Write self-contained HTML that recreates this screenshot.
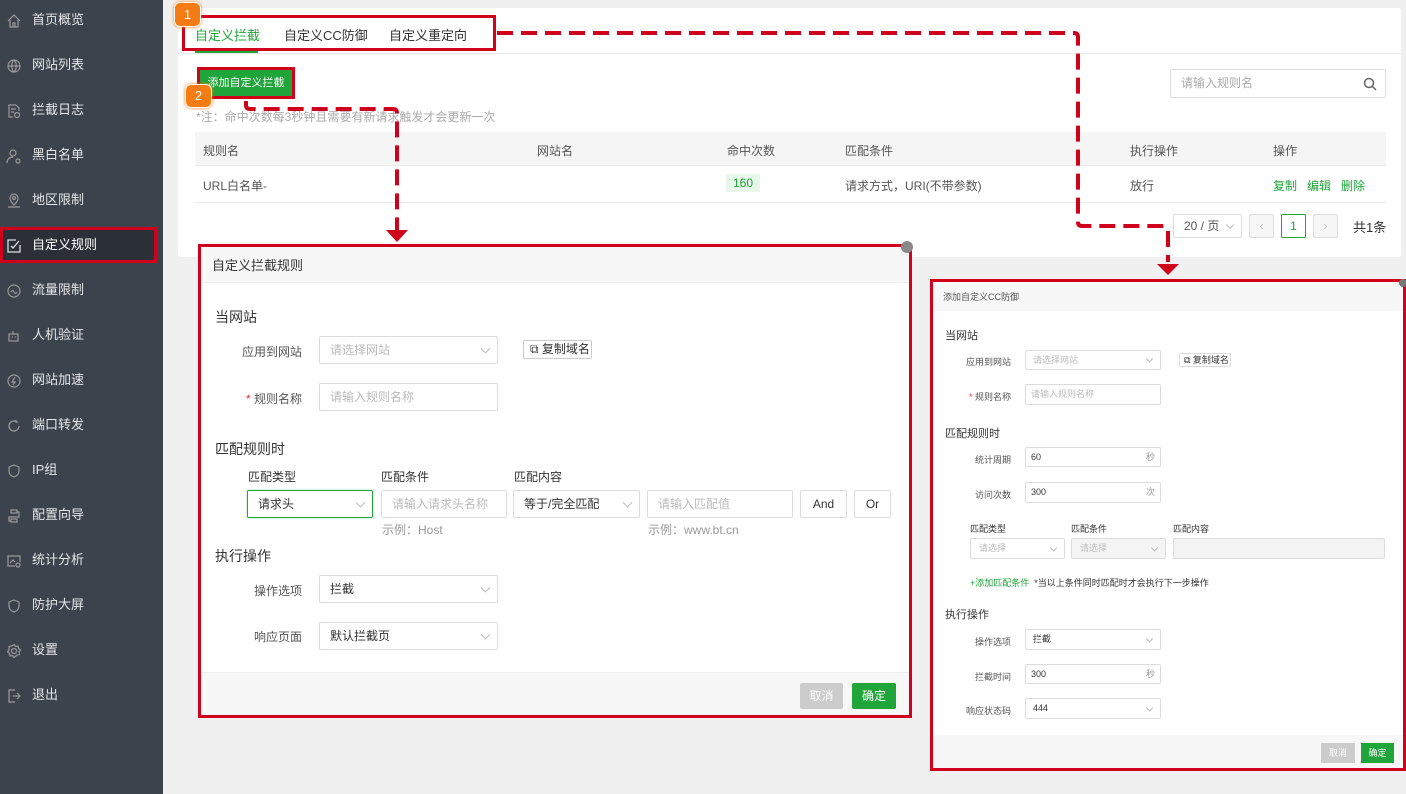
<!DOCTYPE html>
<html><head><meta charset="utf-8"><style>
*{box-sizing:border-box;margin:0;padding:0}
body{width:1406px;height:794px;overflow:hidden;background:#f0f0f0;font-family:"Liberation Sans","Noto Sans CJK SC",sans-serif;position:relative;color:#333}
.a{position:absolute}
.side{left:0;top:0;width:163px;height:794px;background:#3c434d}
.si{position:absolute;left:0;width:163px;height:34px;line-height:34px;font-size:13px;color:#e4e6e9;padding-left:32px}
.si svg{position:absolute;left:6px;top:10px}
.t{font-size:12px;white-space:nowrap}
.inp{position:absolute;border:1px solid #dcdcdc;background:#fff;font-size:12px;color:#bbb;padding-left:10px;white-space:nowrap;border-radius:2px}
.arr{position:absolute;right:8px;top:50%;width:7px;height:7px;border-right:1px solid #bbb;border-bottom:1px solid #bbb;transform:translateY(-70%) rotate(45deg)}
.lbl{position:absolute;font-size:12px;color:#555;text-align:right;white-space:nowrap}
.s2{font-size:9px}
</style></head><body>
<div class="a side">
<div class="si" style="top:3px"><svg width="16" height="16" viewBox="0 0 16 16" fill="none" stroke="#999" stroke-width="1.2"><path d="M2 8 8 2l6 6M4 7v7h8V7M7 14v-4h2v4"/></svg>首页概览</div>
<div class="si" style="top:48px"><svg width="16" height="16" viewBox="0 0 16 16" fill="none" stroke="#999" stroke-width="1.2"><circle cx="8" cy="8" r="6"/><path d="M2 8h12M8 2c-3 3-3 9 0 12M8 2c3 3 3 9 0 12"/></svg>网站列表</div>
<div class="si" style="top:93px"><svg width="16" height="16" viewBox="0 0 16 16" fill="none" stroke="#999" stroke-width="1.2"><path d="M10 2H3v12h4M10 2l3 3v3M5 6h5M5 9h3"/><circle cx="11" cy="12" r="2.5"/></svg>拦截日志</div>
<div class="si" style="top:138px"><svg width="16" height="16" viewBox="0 0 16 16" fill="none" stroke="#999" stroke-width="1.2"><circle cx="7" cy="5" r="3"/><path d="M1 15c0-4 3-6 6-6"/><circle cx="12" cy="13" r="2"/></svg>黑白名单</div>
<div class="si" style="top:183px"><svg width="16" height="16" viewBox="0 0 16 16" fill="none" stroke="#999" stroke-width="1.2"><path d="M8 12s-4-4-4-7a4 4 0 0 1 8 0c0 3-4 7-4 7zM2 14h12"/><circle cx="8" cy="5" r="1.5"/></svg>地区限制</div>
<div class="a" style="left:0;top:227px;width:157px;height:36px;background:#2b3038;border:3px solid #d0021b"></div>
<div class="si" style="top:228px;color:#fff"><svg width="16" height="16" viewBox="0 0 16 16" fill="none" stroke="#ddd" stroke-width="1.3"><path d="M10 2H2v12h12V7M5 8l2 2 6-7"/></svg>自定义规则</div>
<div class="si" style="top:273px"><svg width="16" height="16" viewBox="0 0 16 16" fill="none" stroke="#999" stroke-width="1.2"><circle cx="8" cy="8" r="6"/><path d="M5 9c1-2 2-2 3 0s2 2 3 0"/></svg>流量限制</div>
<div class="si" style="top:318px"><svg width="16" height="16" viewBox="0 0 16 16" fill="none" stroke="#999" stroke-width="1.2"><rect x="3" y="6" width="9" height="7"/><path d="M7 6V3M6 9h1M9 9h1"/></svg>人机验证</div>
<div class="si" style="top:363px"><svg width="16" height="16" viewBox="0 0 16 16" fill="none" stroke="#999" stroke-width="1.2"><circle cx="8" cy="8" r="6"/><path d="M9 4 6 9h3l-2 3"/></svg>网站加速</div>
<div class="si" style="top:408px"><svg width="16" height="16" viewBox="0 0 16 16" fill="none" stroke="#999" stroke-width="1.2"><path d="M13 8a5 5 0 1 1-3-4.6M10 2v2h2"/></svg>端口转发</div>
<div class="si" style="top:453px"><svg width="16" height="16" viewBox="0 0 16 16" fill="none" stroke="#999" stroke-width="1.2"><path d="M8 2l5 2v4c0 3-2 5-5 6-3-1-5-3-5-6V4z"/></svg>IP组</div>
<div class="si" style="top:498px"><svg width="16" height="16" viewBox="0 0 16 16" fill="none" stroke="#999" stroke-width="1.2"><rect x="5" y="2" width="6" height="3"/><rect x="5" y="11" width="6" height="3"/><path d="M11 4h2v5H3v4h2"/></svg>配置向导</div>
<div class="si" style="top:543px"><svg width="16" height="16" viewBox="0 0 16 16" fill="none" stroke="#999" stroke-width="1.2"><path d="M9 13H2V3h12v6M4 10l3-3 2 2"/><circle cx="12" cy="12" r="2"/></svg>统计分析</div>
<div class="si" style="top:588px"><svg width="16" height="16" viewBox="0 0 16 16" fill="none" stroke="#999" stroke-width="1.2"><path d="M8 2l5 2v4c0 3-2 5-5 6-3-1-5-3-5-6V4z"/></svg>防护大屏</div>
<div class="si" style="top:633px"><svg width="16" height="16" viewBox="0 0 16 16" fill="none" stroke="#999" stroke-width="1.2"><circle cx="8" cy="8" r="2.5"/><path d="M8 1.5l1.5 2 2.5-.5.5 2.5 2 1.5-1.5 2 .5 2.5-2.5.5L8 14.5l-1.5-2-2.5.5-.5-2.5-2-1.5 1.5-2L3 3.5l2.5-.5z"/></svg>设置</div>
<div class="si" style="top:678px"><svg width="16" height="16" viewBox="0 0 16 16" fill="none" stroke="#999" stroke-width="1.2"><path d="M9 2H3v12h6M7 8h7M11 5l3 3-3 3"/></svg>退出</div>
</div>

<!-- main card -->
<div class="a" style="left:178px;top:8px;width:1223px;height:249px;background:#fff;border-radius:3px"></div>
<div class="a" style="left:178px;top:53px;width:1223px;height:1px;background:#e8e8e8"></div>
<div class="a" style="left:195px;top:25px;font-size:13px;color:#20a53a">自定义拦截</div>
<div class="a" style="left:195px;top:51px;width:63px;height:2px;background:#20a53a"></div>
<div class="a" style="left:284px;top:25px;font-size:13px;color:#333">自定义CC防御</div>
<div class="a" style="left:389px;top:25px;font-size:13px;color:#333">自定义重定向</div>
<div class="a" style="left:182px;top:15px;width:314px;height:36px;border:3px solid #d0021b"></div>
<div class="a" style="left:197px;top:67px;width:98px;height:32px;background:#20a53a;color:#fff;font-size:11px;line-height:26px;text-align:center;border:3px solid #d0021b">添加自定义拦截</div>
<div class="a" style="left:174px;top:2px;width:27px;height:25px;background:#f57c14;border-radius:6px;color:#fff;font-size:13px;text-align:center;line-height:23px;border:1px solid #fff;box-shadow:0 0 3px #f57c14">1</div>
<div class="a" style="left:185px;top:84px;width:27px;height:24px;background:#f57c14;border-radius:6px;color:#fff;font-size:13px;text-align:center;line-height:22px;border:1px solid #fff;box-shadow:0 0 3px #f57c14">2</div>
<div class="a t" style="left:196px;top:108px;color:#aaa">*注：命中次数每3秒钟且需要有新请求触发才会更新一次</div>
<div class="inp" style="left:1170px;top:69px;width:216px;height:29px;line-height:27px;color:#aaa">请输入规则名<svg class="a" style="right:8px;top:7px" width="14" height="14" viewBox="0 0 14 14" fill="none" stroke="#666" stroke-width="1.5"><circle cx="6" cy="6" r="4.5"/><path d="M9.5 9.5 13 13"/></svg></div>
<div class="a" style="left:195px;top:132px;width:1191px;height:34px;background:#f5f5f5;border-bottom:1px solid #eaeaea"></div>
<div class="a t" style="left:203px;top:142px;color:#555">规则名</div>
<div class="a t" style="left:537px;top:142px;color:#555">网站名</div>
<div class="a t" style="left:727px;top:142px;color:#555">命中次数</div>
<div class="a t" style="left:845px;top:142px;color:#555">匹配条件</div>
<div class="a t" style="left:1130px;top:142px;color:#555">执行操作</div>
<div class="a t" style="left:1273px;top:142px;color:#555">操作</div>
<div class="a" style="left:195px;top:202px;width:1191px;height:1px;background:#eaeaea"></div>
<div class="a t" style="left:203px;top:177px;color:#555">URL白名单-</div>
<div class="a t" style="left:726px;top:174px;background:#e8f6ec;color:#20a53a;padding:2px 7px">160</div>
<div class="a t" style="left:845px;top:177px;color:#555">请求方式，URI(不带参数)</div>
<div class="a t" style="left:1130px;top:177px;color:#555">放行</div>
<div class="a t" style="left:1273px;top:177px;color:#20a53a">复制&nbsp;&nbsp; 编辑&nbsp;&nbsp; 删除</div>
<div class="inp" style="left:1173px;top:214px;width:69px;height:24px;line-height:22px;color:#555">20 / 页<span class="arr" style="width:6px;height:6px"></span></div>
<div class="inp" style="left:1249px;top:214px;width:25px;height:24px;background:#f7f7f7;color:#bbb;line-height:22px;padding:0;text-align:center">‹</div>
<div class="inp" style="left:1281px;top:214px;width:25px;height:24px;border-color:#20a53a;color:#20a53a;line-height:22px;padding:0;text-align:center">1</div>
<div class="inp" style="left:1313px;top:214px;width:25px;height:24px;background:#f7f7f7;color:#bbb;line-height:22px;padding:0;text-align:center">›</div>
<div class="a" style="left:1353px;top:217px;font-size:13px;color:#333">共1条</div>

<!-- dialog 1 -->
<div class="a" style="left:198px;top:244px;width:714px;height:474px;background:#fff;border:3px solid #d0021b"></div>
<div class="a" style="left:201px;top:247px;width:708px;height:36px;background:#f7f7f7;border-bottom:1px solid #eee"></div>
<div class="a" style="left:901px;top:241px;width:12px;height:12px;border-radius:6px;background:#888"></div>
<div class="a" style="left:212px;top:255px;font-size:13px">自定义拦截规则</div>
<div class="a" style="left:215px;top:307px;font-size:14px">当网站</div>
<div class="lbl" style="left:220px;width:82px;top:343px">应用到网站</div>
<div class="inp" style="left:319px;top:336px;width:179px;height:28px;line-height:26px">请选择网站<span class="arr"></span></div>
<div class="inp" style="left:523px;top:340px;width:69px;height:19px;line-height:17px;color:#333;border-color:#ccc;padding-left:6px">⧉ 复制域名</div>
<div class="lbl" style="left:220px;width:82px;top:390px"><span style="color:#e33">*</span> 规则名称</div>
<div class="inp" style="left:319px;top:383px;width:179px;height:28px;line-height:26px">请输入规则名称</div>
<div class="a" style="left:215px;top:439px;font-size:14px">匹配规则时</div>
<div class="a t" style="left:248px;top:468px">匹配类型</div>
<div class="a t" style="left:381px;top:468px">匹配条件</div>
<div class="a t" style="left:514px;top:468px">匹配内容</div>
<div class="inp" style="left:247px;top:490px;width:126px;height:28px;line-height:26px;border-color:#20a53a;color:#333;box-shadow:0 0 2px #9de0ac">请求头<span class="arr"></span></div>
<div class="inp" style="left:381px;top:490px;width:126px;height:28px;line-height:26px">请输入请求头名称</div>
<div class="inp" style="left:513px;top:490px;width:127px;height:28px;line-height:26px;color:#333">等于/完全匹配<span class="arr"></span></div>
<div class="inp" style="left:647px;top:490px;width:146px;height:28px;line-height:26px">请输入匹配值</div>
<div class="inp" style="left:800px;top:490px;width:47px;height:28px;line-height:26px;color:#333;padding:0;text-align:center">And</div>
<div class="inp" style="left:854px;top:490px;width:37px;height:28px;line-height:26px;color:#333;padding:0;text-align:center">Or</div>
<div class="a t" style="left:382px;top:521px;color:#999">示例：Host</div>
<div class="a t" style="left:648px;top:521px;color:#999">示例：www.bt.cn</div>
<div class="a" style="left:215px;top:546px;font-size:14px">执行操作</div>
<div class="lbl" style="left:220px;width:82px;top:582px">操作选项</div>
<div class="inp" style="left:319px;top:575px;width:179px;height:28px;line-height:26px;color:#333">拦截<span class="arr"></span></div>
<div class="lbl" style="left:220px;width:82px;top:628px">响应页面</div>
<div class="inp" style="left:319px;top:622px;width:179px;height:28px;line-height:26px;color:#333">默认拦截页<span class="arr"></span></div>
<div class="a" style="left:201px;top:672px;width:708px;height:43px;background:#f7f7f7;border-top:1px solid #eee"></div>
<div class="a t" style="left:800px;top:683px;width:43px;height:26px;line-height:26px;text-align:center;background:#ccc;color:#fff;border-radius:2px">取消</div>
<div class="a t" style="left:852px;top:683px;width:44px;height:26px;line-height:26px;text-align:center;background:#20a53a;color:#fff;border-radius:2px">确定</div>

<!-- dialog 2 -->
<div class="a" style="left:930px;top:279px;width:476px;height:492px;background:#fff;border:3px solid #d0021b"></div>
<div class="a" style="left:933px;top:282px;width:470px;height:29px;background:#f7f7f7"></div>
<div class="a" style="left:1399px;top:279px;width:8px;height:8px;border-radius:4px;background:#777"></div>
<div class="a s2" style="left:943px;top:290px;color:#555">添加自定义CC防御</div>
<div class="a" style="left:945px;top:327px;font-size:11px">当网站</div>
<div class="lbl s2" style="left:950px;width:61px;top:355px">应用到网站</div>
<div class="inp s2" style="left:1025px;top:350px;width:136px;height:20px;line-height:18px;padding-left:7px">请选择网站<span class="arr" style="width:5px;height:5px"></span></div>
<div class="inp s2" style="left:1179px;top:353px;width:52px;height:14px;line-height:12px;color:#333;padding-left:4px">⧉ 复制域名</div>
<div class="lbl s2" style="left:950px;width:61px;top:390px"><span style="color:#e33">*</span> 规则名称</div>
<div class="inp s2" style="left:1025px;top:384px;width:136px;height:21px;line-height:19px;padding-left:5px">请输入规则名称</div>
<div class="a" style="left:945px;top:425px;font-size:11px">匹配规则时</div>
<div class="lbl s2" style="left:950px;width:61px;top:453px">统计周期</div>
<div class="inp s2" style="left:1025px;top:447px;width:136px;height:20px;line-height:18px;color:#333;padding-left:5px">60<span class="a" style="right:5px;color:#999">秒</span></div>
<div class="lbl s2" style="left:950px;width:61px;top:488px">访问次数</div>
<div class="inp s2" style="left:1025px;top:482px;width:136px;height:21px;line-height:19px;color:#333;padding-left:5px">300<span class="a" style="right:5px;color:#999">次</span></div>
<div class="a s2" style="left:970px;top:522px">匹配类型</div>
<div class="a s2" style="left:1071px;top:522px">匹配条件</div>
<div class="a s2" style="left:1173px;top:522px">匹配内容</div>
<div class="inp s2" style="left:970px;top:538px;width:95px;height:21px;line-height:19px;padding-left:8px">请选择<span class="arr" style="width:5px;height:5px"></span></div>
<div class="inp s2" style="left:1071px;top:538px;width:95px;height:21px;line-height:19px;padding-left:8px;background:#f5f5f5">请选择<span class="arr" style="width:5px;height:5px"></span></div>
<div class="inp" style="left:1173px;top:538px;width:212px;height:21px;background:#f3f3f3"></div>
<div class="a s2" style="left:970px;top:576px;color:#20a53a">+添加匹配条件 <span style="color:#333">&nbsp;*当以上条件同时匹配时才会执行下一步操作</span></div>
<div class="a" style="left:945px;top:606px;font-size:11px">执行操作</div>
<div class="lbl s2" style="left:950px;width:61px;top:635px">操作选项</div>
<div class="inp s2" style="left:1025px;top:629px;width:136px;height:21px;line-height:19px;color:#333;padding-left:7px">拦截<span class="arr" style="width:5px;height:5px"></span></div>
<div class="lbl s2" style="left:950px;width:61px;top:670px">拦截时间</div>
<div class="inp s2" style="left:1025px;top:664px;width:136px;height:20px;line-height:18px;color:#333;padding-left:5px">300<span class="a" style="right:5px;color:#999">秒</span></div>
<div class="lbl s2" style="left:950px;width:61px;top:704px">响应状态码</div>
<div class="inp s2" style="left:1025px;top:698px;width:136px;height:21px;line-height:19px;color:#333;padding-left:7px">444<span class="arr" style="width:5px;height:5px"></span></div>
<div class="a" style="left:933px;top:735px;width:470px;height:33px;background:#f7f7f7"></div>
<div class="a s2" style="left:1321px;top:743px;width:34px;height:20px;line-height:20px;text-align:center;background:#ccc;color:#fff">取消</div>
<div class="a s2" style="left:1361px;top:743px;width:33px;height:20px;line-height:20px;text-align:center;background:#20a53a;color:#fff">确定</div>

<!-- dashed connectors -->
<svg class="a" style="left:0;top:0" width="1406" height="794">
<g fill="none" stroke="#d0021b" stroke-width="4" stroke-dasharray="16,8">
<path d="M497 33H1074q4 0 4 4V222q0 4 4 4H1164q4 0 4 4V262"/>
<path d="M246 101v4q0 4 4 4H393q4 0 4 4V230"/>
</g>
<path d="M386 230h22l-11 12z" fill="#d0021b"/>
<path d="M1157 264h22l-11 11z" fill="#d0021b"/>
</svg>
</body></html>
